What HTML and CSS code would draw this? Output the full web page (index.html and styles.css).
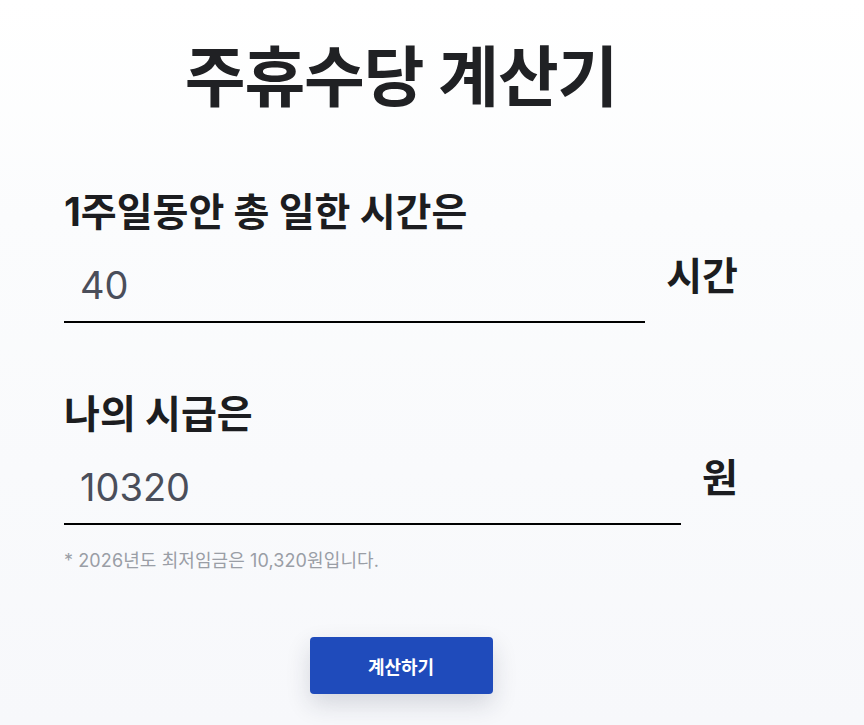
FILE: index.html
```html
<!DOCTYPE html>
<html lang="ko">
<head>
<meta charset="utf-8">
<title>주휴수당 계산기</title>
<link rel="stylesheet" href="styles.css">
</head>
<body>
<main class="calc">
  <h1 class="calc-title">주휴수당 계산기</h1>

  <section class="field">
    <label class="field-label" for="hours">1주일동안 총 일한 시간은</label>
    <div class="field-row">
      <input class="field-input" id="hours" type="text" value="40">
      <span class="field-unit">시간</span>
    </div>
  </section>

  <section class="field field-second">
    <label class="field-label" for="wage">나의 시급은</label>
    <div class="field-row">
      <input class="field-input" id="wage" type="text" value="10320">
      <span class="field-unit">원</span>
    </div>
  </section>

  <p class="calc-note">* 2026년도 최저임금은 10,320원입니다.</p>

  <div class="calc-actions">
    <button class="calc-btn" type="button">계산하기</button>
  </div>
</main>
</body>
</html>
```

FILE: styles.css
```css
html, body {
  margin: 0;
  padding: 0;
}

body {
  min-height: 725px;
  background: linear-gradient(to bottom, #ffffff 0%, #fbfcfd 30%, #f7f8fb 100%);
  font-family: Inter, "Noto Sans CJK KR", sans-serif;
  color: #1f2023;
}

.calc {
  width: 674px;
  margin-left: 64px;
  padding-top: 37px;
}

.calc-title {
  margin: 0;
  text-align: center;
  font-size: 66px;
  line-height: 80px;
  font-weight: 700;
  letter-spacing: -1px;
  color: #202124;
}

.field {
  margin-top: 72px;
}

.field-second {
  margin-top: 68px;
}

.field-label {
  display: block;
  font-size: 39px;
  line-height: 46px;
  font-weight: 700;
  color: #1c1d20;
}

.field-row {
  display: flex;
  align-items: center;
  gap: 21px;
  margin-top: 14px;
}

.field-input {
  flex: 1;
  min-width: 0;
  box-sizing: border-box;
  height: 74px;
  padding: 0 16px;
  border: none;
  border-bottom: 2px solid #000;
  background: transparent;
  font-family: Inter, "Noto Sans CJK KR", sans-serif;
  font-size: 38px;
  color: #4a4e5a;
  outline: none;
}

.field-unit {
  font-size: 39px;
  line-height: 46px;
  font-weight: 700;
  color: #1c1d20;
  padding-bottom: 21px;
}

.calc-note {
  margin: 24px 0 0;
  font-size: 18px;
  line-height: 24px;
  letter-spacing: 0.1px;
  color: #9a9ea6;
}

.calc-actions {
  display: flex;
  justify-content: center;
  margin-top: 64px;
}

.calc-btn {
  width: 183px;
  height: 57px;
  border: none;
  border-radius: 4px;
  background: #1f4bbb;
  color: #ffffff;
  font-family: Inter, "Noto Sans CJK KR", sans-serif;
  font-size: 18px;
  font-weight: 700;
  box-shadow: 0 10px 24px rgba(30, 35, 60, 0.16);
  cursor: pointer;
}
```
